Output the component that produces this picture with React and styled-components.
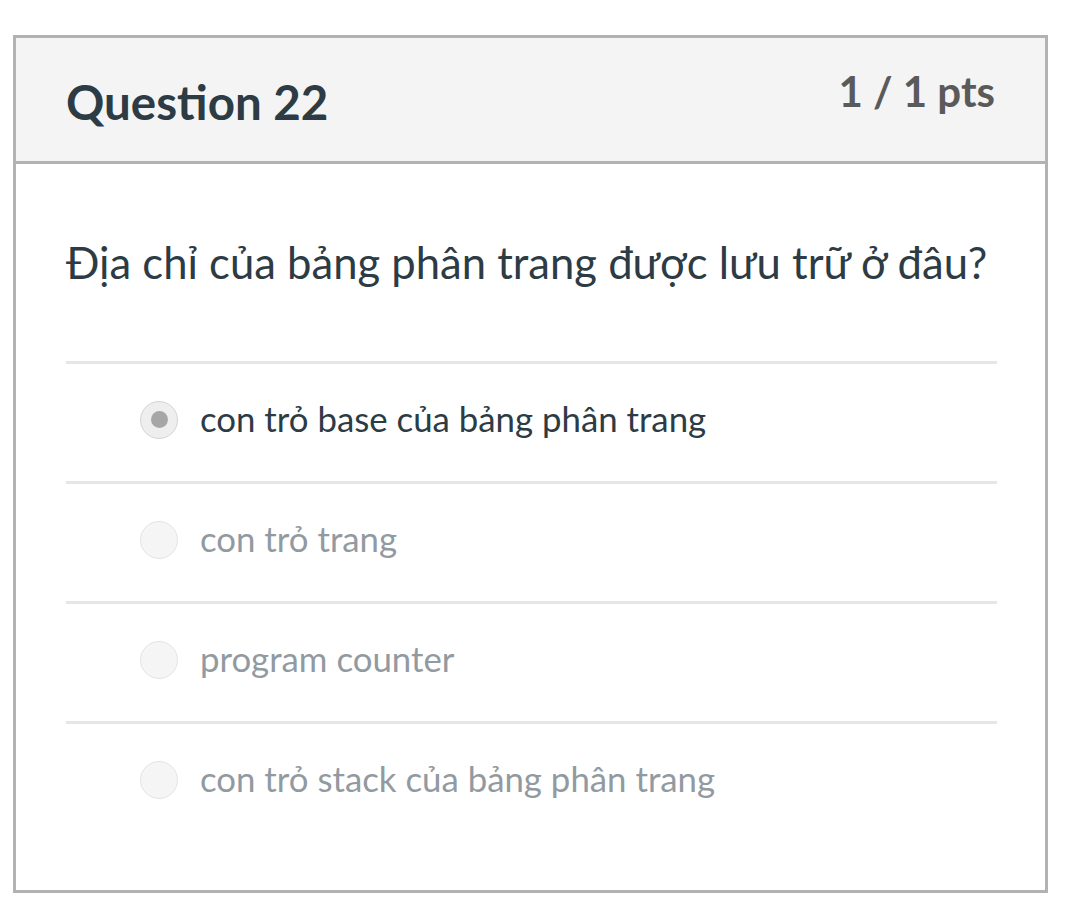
import React from "react";
import styled, { createGlobalStyle } from "styled-components";

const Global = createGlobalStyle`
  html, body { margin: 0; padding: 0; background: #ffffff; }
  body { font-family: Lato, "Noto Sans", sans-serif; }
`;

const Page = styled.div`
  padding: 35px 0 0 13px;
`;

const Card = styled.section`
  width: 1035px;
  height: 858px;
  box-sizing: border-box;
  border: 3px solid #b2b2b2;
  display: flex;
  flex-direction: column;
`;

const Header = styled.header`
  height: 126px;
  box-sizing: border-box;
  background: #f4f4f4;
  border-bottom: 3px solid #b2b2b2;
  display: flex;
  justify-content: space-between;
  align-items: flex-start;
  padding: 0 50px;
`;

const Title = styled.h2`
  margin: 35px 0 0;
  font-size: 47.5px;
  line-height: 1.2;
  font-weight: 700;
  color: #2d3b45;
`;

const Points = styled.div`
  margin-top: 28px;
  font-size: 42px;
  line-height: 1.2;
  font-weight: 700;
  color: #5a5a5a;
`;

const Body = styled.div`
  padding: 0 48px 0 50px;
`;

const QuestionText = styled.p`
  margin: 0;
  padding-top: 72px;
  height: 197px;
  box-sizing: border-box;
  font-size: 43.6px;
  line-height: 1.2;
  color: #2d3b45;
`;

const Answers = styled.div`
  display: flex;
  flex-direction: column;
`;

const Row = styled.label`
  height: 120px;
  box-sizing: border-box;
  border-top: 3px solid #e6e6e6;
  display: flex;
  align-items: center;
  padding: 0 0 0 74px;
  gap: 22px;
`;

const Radio = styled.span`
  width: 38px;
  height: 38px;
  margin-bottom: 6px;
  box-sizing: border-box;
  border-radius: 50%;
  border: 1.5px solid ${(p) => (p.$checked ? "#d4d4d4" : "#e4e4e4")};
  background: ${(p) => (p.$checked ? "#eeeeee" : "#f5f5f5")};
  display: flex;
  align-items: center;
  justify-content: center;
  flex-shrink: 0;
  &::after {
    content: "";
    display: ${(p) => (p.$checked ? "block" : "none")};
    width: 17px;
    height: 17px;
    border-radius: 50%;
    background: #a6a6a6;
  }
`;

const AnswerText = styled.span`
  font-size: 34.8px;
  line-height: 1.2;
  margin-bottom: 8px;
  color: ${(p) => (p.$checked ? "#2d3b45" : "#929aa1")};
`;

const answers = [
  { text: "con trỏ base của bảng phân trang", checked: true },
  { text: "con trỏ trang", checked: false },
  { text: "program counter", checked: false },
  { text: "con trỏ stack của bảng phân trang", checked: false },
];

export default function App() {
  return (
    <>
      <Global />
      <Page>
        <Card>
          <Header>
            <Title>Question 22</Title>
            <Points>1 / 1 pts</Points>
          </Header>
          <Body>
            <QuestionText>Địa chỉ của bảng phân trang được lưu trữ ở đâu?</QuestionText>
            <Answers>
              {answers.map((a) => (
                <Row key={a.text}>
                  <Radio $checked={a.checked} />
                  <AnswerText $checked={a.checked}>{a.text}</AnswerText>
                </Row>
              ))}
            </Answers>
          </Body>
        </Card>
      </Page>
    </>
  );
}
